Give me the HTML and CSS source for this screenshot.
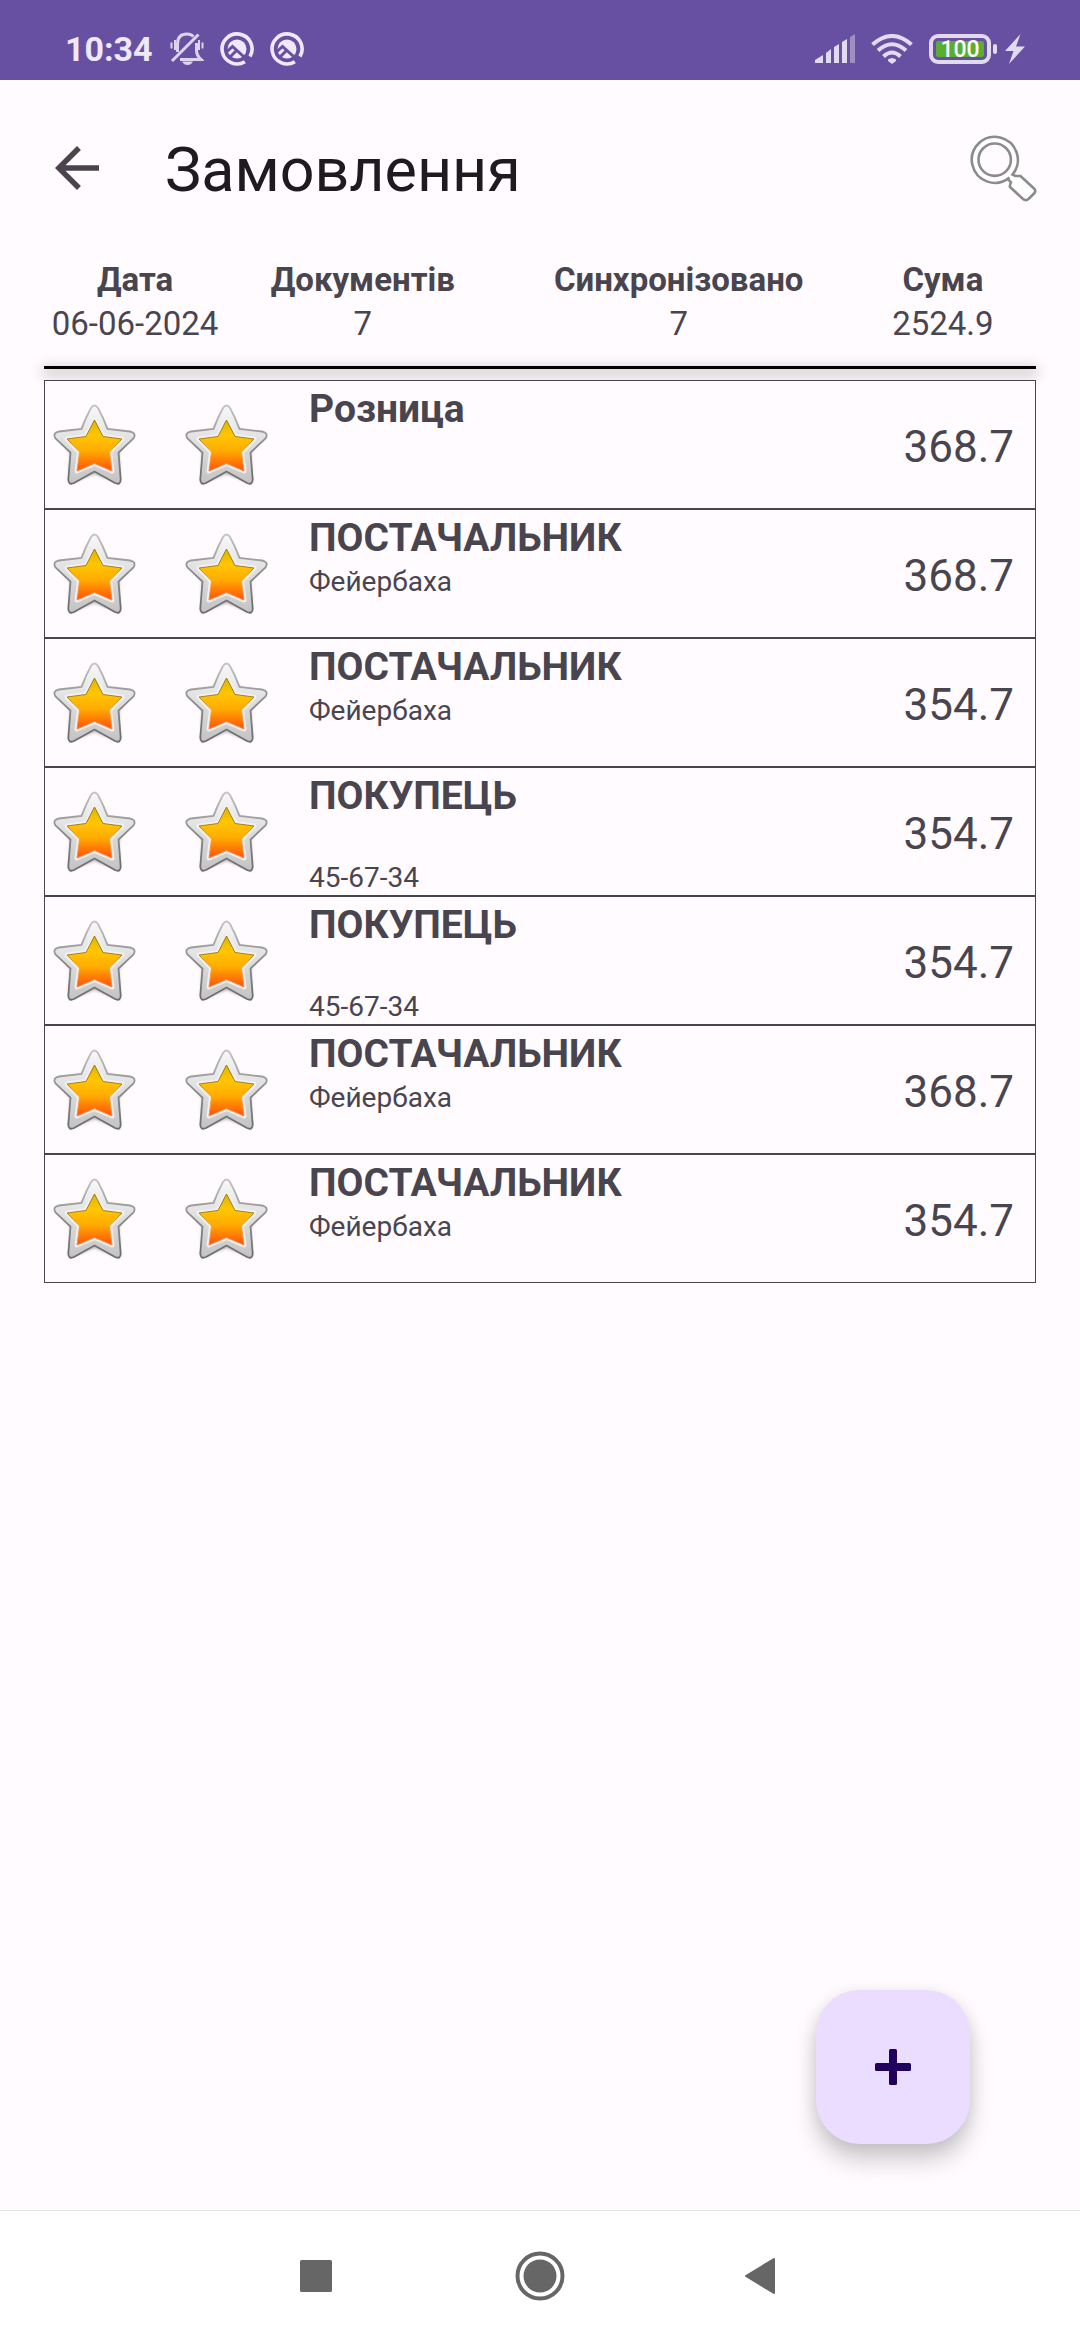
FILE: index.html
```html
<!DOCTYPE html>
<html lang="uk">
<head>
<meta charset="utf-8">
<meta name="viewport" content="width=device-width">
<title>Замовлення</title>
<link rel="stylesheet" href="styles.css">
</head>
<body>
<svg class="defs" aria-hidden="true">
  <defs>
    <linearGradient id="silver" x1="0" y1="0" x2="0" y2="1">
      <stop offset="0" stop-color="#f8f8f8"/><stop offset="1" stop-color="#c2c3c2"/>
    </linearGradient>
    <linearGradient id="edge" x1="0" y1="0" x2="0" y2="1">
      <stop offset="0" stop-color="#c4c4c4"/><stop offset="0.5" stop-color="#8a8a8a"/><stop offset="1" stop-color="#6c6c6c"/>
    </linearGradient>
    <linearGradient id="gold" x1="0" y1="0" x2="0" y2="1">
      <stop offset="0" stop-color="#e0b400"/><stop offset="0.3" stop-color="#ffc600"/><stop offset="0.6" stop-color="#ffac00"/><stop offset="1" stop-color="#ff5008"/>
    </linearGradient>
    <linearGradient id="goldedge" x1="0" y1="0" x2="0" y2="1">
      <stop offset="0" stop-color="#8f7a20"/><stop offset="0.4" stop-color="#a8821c"/><stop offset="0.6" stop-color="#f0a840"/><stop offset="1" stop-color="#ff8050"/>
    </linearGradient>
    <filter id="soft" x="-20%" y="-20%" width="140%" height="140%"><feGaussianBlur stdDeviation="1.5"/></filter>
    <symbol id="star" viewBox="0 0 99 99">
      <path d="M49.5 11L63 35L87 38L74 58L75 89L49.5 79L24 89L25 58L12 38L36 35Z" fill="#666" opacity=".5" filter="url(#soft)"/>
      <path d="M46 13Q49.500 8 53 13Q58 22 62.500 34L85 36.500Q92 38 88.500 43.500L73.500 57.500L75.700 84.500Q75.500 90.500 70 88L49.500 76.500L29 88Q23.500 90.500 23.300 84.500L25.500 57.500L10.500 43.500Q7 38 14 36.500L36.500 34Q41 22 46 13Z" fill="url(#silver)" stroke="url(#edge)" stroke-width="1.800"/>
      <path d="M49.500 25L58 41.500L77 44L64.500 57L67 76L49.500 68.500L32 76L34.500 57L22 44L41 41.500Z" fill="#f4f3f0" stroke="#f1f0ee" stroke-width="5" stroke-linejoin="round"/>
      <path d="M49.500 25L58 41.500L77 44L64.500 57L67 76L49.500 68.500L32 76L34.500 57L22 44L41 41.500Z" fill="url(#gold)" stroke="url(#goldedge)" stroke-width="1"/>
    </symbol>
    <symbol id="ring" viewBox="0 0 34 34">
      <path d="M24.900 29.700A15 15 0 1 1 30 24.500" fill="none" stroke="#eee8f8" stroke-width="3.600"/>
      <circle cx="17" cy="17" r="9.500" fill="#eee8f8"/>
      <path d="M7 19.500L12.500 14.500L28 28.500M9 26L17 18" fill="none" stroke="#674fa1" stroke-width="3"/>
    </symbol>
  </defs>
</svg>

<header class="status">
  <div class="status-left">
    <span class="clock">10:34</span>
    <svg class="status-icon" viewBox="0 0 34 34" fill="none" stroke="#dcd3ec" stroke-width="3">
      <path d="M7.500 20V12Q7.500 2 17 2Q21 2 23.500 4.500"/><path d="M26.500 11V19Q27 24 31 27.500H10"/>
      <path d="M2 29L28.500 2.500"/><path d="M1.500 10.500V16.500M5 8V18M29 8V18M32.500 10.500V16.500" stroke-width="2"/>
      <path d="M12 29.500H23Q21 33 17.500 33Q14 33 12 29.500Z" fill="#dcd3ec" stroke="none"/>
    </svg>
    <svg class="status-icon" viewBox="0 0 34 34"><use href="#ring" width="34" height="34"/></svg>
    <svg class="status-icon" viewBox="0 0 34 34"><use href="#ring" width="34" height="34"/></svg>
  </div>
  <div class="status-right">
    <svg class="signal" viewBox="0 0 40 30" fill="#e2dbf0">
      <path d="M0 29V26L8 21V29ZM11 29V19L16 15V29ZM19 29V13L24 10V29ZM27 29V8L32 5V29Z"/>
      <path d="M35 29V3L40 0V29Z" opacity=".45"/>
    </svg>
    <svg class="wifi" viewBox="0 0 42 30" fill="none" stroke="#e2dbf0" stroke-width="4">
      <path d="M1.500 10.500Q21 -6.500 40.500 10.500M7 16.500Q21 4 35 16.500M12.500 22.500Q21 14.500 29.500 22.500"/>
      <path d="M17 25.500Q21 22.500 25 25.500V27L21 30L17 27Z" fill="#e2dbf0" stroke="none"/>
    </svg>
    <div class="battery"><span class="charge">100</span></div>
    <svg class="bolt" viewBox="0 0 20 30"><path d="M15.500 0L0 17H8.500L4 30L20 12.500H11Z" fill="#e2dbf0"/></svg>
  </div>
</header>

<main class="screen">
  <div class="toolbar">
    <button class="icon-button" type="button" aria-label="Назад">
      <svg class="back" viewBox="0 0 24 24"><path d="M20 11H7.830l5.590-5.590L12 4l-8 8 8 8 1.410-1.410L7.830 13H20v-2z" fill="#49454f"/></svg>
    </button>
    <h1 class="title">Замовлення</h1>
    <button class="icon-button" type="button" aria-label="Пошук">
      <svg class="search" viewBox="0 0 88 88" stroke="#8b8b8b" stroke-width="2.600">
        <path d="M50.500 53.500A23 23 0 1 1 53.500 50.500L56.300 52H61.500L75 64.500Q77.500 67 75 69.500L70 74.500Q67 77.500 64 75L51 63Q50.500 61.500 52 58.500L48.700 54.800" fill="#fff"/>
        <circle cx="35.700" cy="35.700" r="16.200" fill="#fffbff"/>
      </svg>
    </button>
  </div>

  <table class="summary">
    <colgroup><col class="col-date"><col class="col-docs"><col class="col-sync"><col class="col-sum"></colgroup>
    <thead><tr><th scope="col">Дата</th><th scope="col">Документів</th><th scope="col">Синхронізовано</th><th scope="col">Сума</th></tr></thead>
    <tbody><tr><td>06-06-2024</td><td>7</td><td>7</td><td>2524.9</td></tr></tbody>
  </table>
  <hr class="rule">

  <ul class="orders">
    <li class="order"><svg class="star"><use href="#star"/></svg><svg class="star"><use href="#star"/></svg>
      <div class="client"><h2>Розница</h2><p></p><p></p></div><span class="amount">368.7</span></li>
    <li class="order"><svg class="star"><use href="#star"/></svg><svg class="star"><use href="#star"/></svg>
      <div class="client"><h2>ПОСТАЧАЛЬНИК</h2><p>Фейербаха</p><p></p></div><span class="amount">368.7</span></li>
    <li class="order"><svg class="star"><use href="#star"/></svg><svg class="star"><use href="#star"/></svg>
      <div class="client"><h2>ПОСТАЧАЛЬНИК</h2><p>Фейербаха</p><p></p></div><span class="amount">354.7</span></li>
    <li class="order"><svg class="star"><use href="#star"/></svg><svg class="star"><use href="#star"/></svg>
      <div class="client"><h2>ПОКУПЕЦЬ</h2><p></p><p>45-67-34</p></div><span class="amount">354.7</span></li>
    <li class="order"><svg class="star"><use href="#star"/></svg><svg class="star"><use href="#star"/></svg>
      <div class="client"><h2>ПОКУПЕЦЬ</h2><p></p><p>45-67-34</p></div><span class="amount">354.7</span></li>
    <li class="order"><svg class="star"><use href="#star"/></svg><svg class="star"><use href="#star"/></svg>
      <div class="client"><h2>ПОСТАЧАЛЬНИК</h2><p>Фейербаха</p><p></p></div><span class="amount">368.7</span></li>
    <li class="order"><svg class="star"><use href="#star"/></svg><svg class="star"><use href="#star"/></svg>
      <div class="client"><h2>ПОСТАЧАЛЬНИК</h2><p>Фейербаха</p><p></p></div><span class="amount">354.7</span></li>
  </ul>

  <button class="fab" type="button" aria-label="Додати">
    <svg class="plus" viewBox="0 0 36 36" fill="#21005d"><rect x="14" width="8" height="36" rx="1.500"/><rect y="14" width="36" height="8" rx="1.500"/></svg>
  </button>
</main>

<nav class="navbar">
  <button type="button" aria-label="Останні"><svg viewBox="0 0 50 50"><rect x="9" y="9" width="32" height="32" rx="1.500" fill="#666"/></svg></button>
  <button type="button" aria-label="Додому"><svg viewBox="0 0 50 50"><circle cx="25" cy="25" r="22.500" fill="none" stroke="#666" stroke-width="4"/><circle cx="25" cy="25" r="16.500" fill="#666"/></svg></button>
  <button type="button" aria-label="Повернутися"><svg viewBox="0 0 50 50"><path d="M7 25L35 8V42Z" fill="#666" stroke="#666" stroke-width="2" stroke-linejoin="round"/></svg></button>
</nav>
</body>
</html>
```
FILE: styles.css
```css
* { box-sizing: border-box; }

body {
  margin: 0;
  min-height: 100vh;
  display: flex;
  flex-direction: column;
  background: #fffbff;
  color: #49454f;
  font-family: Roboto, sans-serif;
}

button {
  display: flex;
  align-items: center;
  justify-content: center;
  padding: 0;
  border: 0;
  background: none;
}

svg { display: block; flex: none; }
h1, h2, p, ul { margin: 0; padding: 0; }
.defs { position: absolute; width: 0; height: 0; }

/* Status bar */
.status {
  display: flex;
  justify-content: space-between;
  height: 80px;
  padding: 18px 55px 0 65px;
  background: #674fa1;
}
.status-left, .status-right { display: flex; align-items: center; gap: 16px; }
.clock { padding-right: 1px; color: #eee8f8; font-size: 34px; font-weight: 700; line-height: 62px; }
.status-icon { width: 34px; height: 34px; }
.signal { width: 40px; height: 30px; }
.wifi { width: 42px; height: 30px; }
.battery {
  position: relative;
  width: 62px;
  height: 30px;
  padding: 3px;
  border: 4px solid #e2dbf0;
  border-radius: 9px;
}
.battery::after {
  content: "";
  position: absolute;
  top: 6px;
  right: -10px;
  width: 4px;
  height: 10px;
  border-radius: 2px;
  background: #e2dbf0;
}
.charge {
  display: block;
  height: 16px;
  border-radius: 2px;
  background: #5aad30;
  color: #fff;
  font-size: 23px;
  font-weight: 500;
  line-height: 18px;
  text-align: center;
}
.bolt { width: 20px; height: 30px; }
.status-right .bolt { margin-left: -2px; }

/* Screen */
.screen {
  position: relative;
  flex: 1;
  display: flex;
  flex-direction: column;
  padding-bottom: 66px;
}
.toolbar {
  display: flex;
  align-items: center;
  height: 176px;
  padding: 0 33px 0 44px;
}
.back { width: 66px; height: 66px; }
.search { width: 88px; height: 88px; }
.title {
  flex: 1;
  padding: 4px 0 0 55px;
  color: #1d1b20;
  font-size: 61px;
  font-weight: 400;
  line-height: 72px;
}

.summary {
  margin: 2px 52px 20px 44px;
  border-collapse: collapse;
  table-layout: fixed;
  font-size: 33px;
  line-height: 44px;
  text-align: center;
}
.summary th, .summary td { padding: 0; }
.summary th { font-weight: 700; }
.col-date { width: 18.500%; }
.col-docs { width: 27.800%; }
.col-sync { width: 36.400%; }
.col-sum { width: 17.300%; }

.rule {
  width: auto;
  height: 3px;
  margin: 0 44px 11px;
  border: 0;
  background: #000;
  box-shadow: 0 4px 14px 2px rgba(0, 0, 0, .28);
}

.orders { position: relative; margin: 0 44px; list-style: none; background: #fffbff; }
.order {
  display: flex;
  align-items: center;
  gap: 33px;
  height: 129px;
  padding-right: 21px;
  border: 1px solid #49454f;
}
.star { width: 99px; height: 99px; }
.client { flex: 1; align-self: flex-start; padding-top: 3px; }
.client h2 { font-size: 39px; font-weight: 700; line-height: 50px; }
.client p { height: 38px; font-size: 28px; line-height: 38px; }
.amount { padding-top: 5px; font-size: 44px; line-height: 52px; }

.fab {
  position: absolute;
  right: 110px;
  bottom: 66px;
  width: 154px;
  height: 154px;
  border-radius: 44px;
  background: #eaddff;
  box-shadow: 0 16px 24px rgba(0, 0, 0, .2), 0 2px 16px rgba(0, 0, 0, .08);
}
.plus { width: 36px; height: 36px; }

/* System navigation */
.navbar {
  display: flex;
  justify-content: center;
  height: 130px;
  border-top: 1px solid #e4e4e6;
  background: #fff;
}
.navbar button { width: 224px; }
.navbar svg { width: 50px; height: 50px; }
```
